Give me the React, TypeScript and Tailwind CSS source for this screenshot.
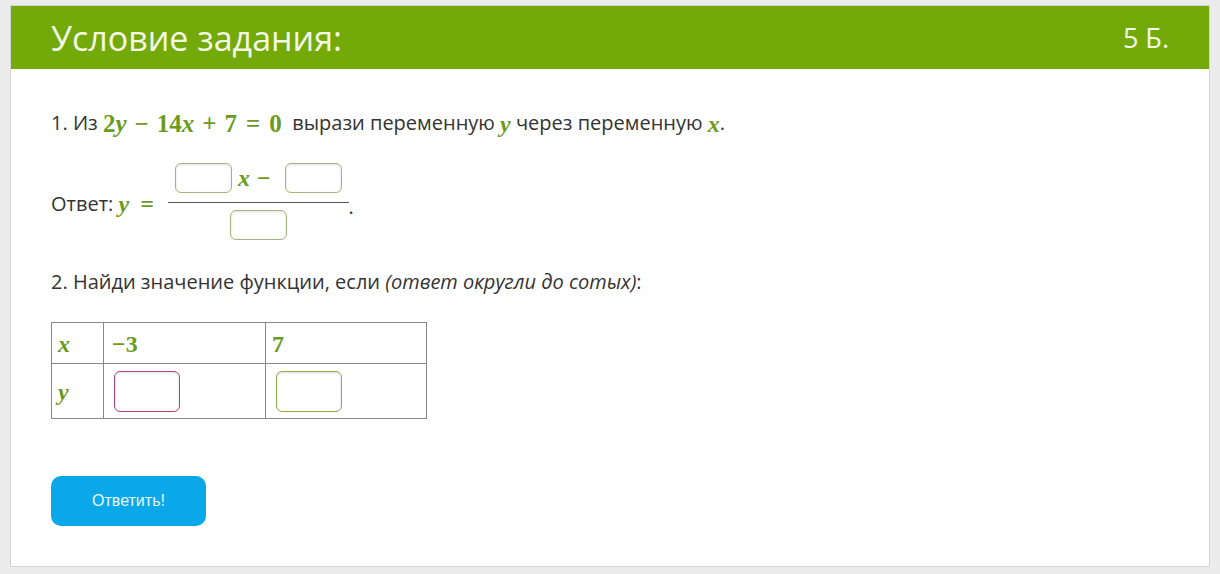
import React from 'react';

const M: React.FC<{ children: React.ReactNode; italic?: boolean; className?: string }> = ({ children, italic, className = '' }) => (
  <span
    className={`text-[#6b9b1c] font-bold ${italic ? 'italic' : ''} ${className}`}
    style={{ fontFamily: '"Liberation Serif", "DejaVu Serif", serif' }}
  >
    {children}
  </span>
);

const Box: React.FC<{ className?: string }> = ({ className = '' }) => (
  <span
    className={`inline-block rounded-md border bg-white shadow-[inset_0_1px_3px_rgba(0,0,0,0.12)] ${className}`}
  />
);

export default function App() {
  return (
    <div
      className="min-h-[574px] bg-[#ececec] pt-[5px] pl-[10px] pr-[10px] pb-[7px] text-[#333]"
      style={{ fontFamily: '"Open Sans", "Noto Sans", sans-serif' }}
    >
      <div className="h-[562px] border border-[#d4d4d4] bg-white">
        <div className="flex h-[63px] items-center justify-between bg-[#74a90a] pl-[40px] pr-[40px] text-[#f3f9e6]">
          <h1 className="text-[34px] leading-none">Условие задания:</h1>
          <span className="text-[27px] leading-none">5 Б.</span>
        </div>

        <div className="pl-[40px] pt-[36px] text-[20px]">
          <p className="flex h-[36px] items-center">
            <span>1. Из&nbsp;</span>
            <span className="text-[25px]">
              <M>2</M>
              <M italic>y</M>
              <M className="mx-[8px]">−</M>
              <M>14</M>
              <M italic>x</M>
              <M className="mx-[8px]">+</M>
              <M>7</M>
              <M className="mx-[9px]">=</M>
              <M>0</M>
            </span>
            <span>&nbsp; вырази переменную&nbsp;</span>
            <span className="text-[24px]"><M italic>y</M></span>
            <span>&nbsp;через переменную&nbsp;</span>
            <span className="text-[24px]"><M italic>x</M></span>
            <span>.</span>
          </p>

          <div className="mt-[18px] flex items-center">
            <span>Ответ:&nbsp;</span>
            <span className="mr-[14px] text-[24px]">
              <M italic>y</M>
              <M className="ml-[11px]">=</M>
            </span>
            <span className="inline-flex flex-col items-center">
              <span className="flex items-center px-[7px] pb-[6px]">
                <Box className="h-[30px] w-[57px] border-[#a3b679]" />
                <span className="ml-[6px] text-[24px]"><M italic>x</M></span>
                <span className="ml-[7px] mr-[14px] text-[24px]"><M>−</M></span>
                <Box className="h-[30px] w-[57px] border-[#a3b679]" />
              </span>
              <span className="h-px w-full bg-[#555]" />
              <span className="pt-[7px]">
                <Box className="h-[30px] w-[57px] border-[#a3b679]" />
              </span>
            </span>
            <span className="mt-[6px] self-center">.</span>
          </div>

          <p className="mt-[19px]">
            2. Найди значение функции, если <i>(ответ округли до сотых)</i>:
          </p>

          <table className="mt-[25px] border-collapse">
            <tbody>
              <tr className="h-[41px]">
                <td className="w-[52px] border border-[#888] pl-[6px] text-[24px]"><M italic>x</M></td>
                <td className="w-[162px] border border-[#888] pl-[8px] text-[24px]"><M>−3</M></td>
                <td className="w-[161px] border border-[#888] pl-[6px] text-[24px]"><M>7</M></td>
              </tr>
              <tr className="h-[55px]">
                <td className="border border-[#888] pl-[6px] text-[24px]"><M italic>y</M></td>
                <td className="border border-[#888] p-0 pl-[10px] align-middle">
                  <div className="flex items-center">
                    <Box className="h-[41px] w-[66px] border-[#b0427f]" />
                  </div>
                </td>
                <td className="border border-[#888] p-0 pl-[10px] align-middle">
                  <div className="flex items-center">
                    <Box className="h-[41px] w-[66px] border-[#8fa94c]" />
                  </div>
                </td>
              </tr>
            </tbody>
          </table>

          <button
            className="mt-[57px] flex h-[50px] w-[155px] items-center justify-center rounded-[10px] bg-[#0aa8e8] text-[16px] text-[#eaf8ff]"
            style={{ fontFamily: '"Liberation Sans", Arial, sans-serif' }}
          >
            Ответить!
          </button>
        </div>
      </div>
    </div>
  );
}
